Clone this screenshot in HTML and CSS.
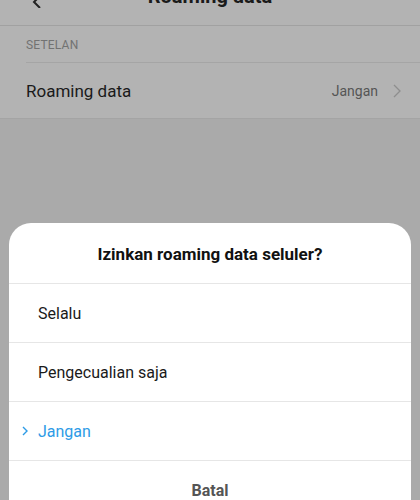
FILE: index.html
```html
<!DOCTYPE html>
<html>
<head>
<meta charset="utf-8">
<link rel="stylesheet" href="styles.css">
</head>
<body>
<div class="screen">
  <header class="topbar">
    <span class="back"><svg width="12" height="12" viewBox="0 0 12 12"><path d="M9 0 L3 6 L9 12" fill="none" stroke="#222" stroke-width="2"/></svg></span>
    <h1 class="title">Roaming data</h1>
  </header>
  <div class="section-label">SETELAN</div>
  <div class="setting-row">
    <span class="setting-name">Roaming data</span>
    <span class="setting-value">Jangan</span>
    <svg class="chev" width="8" height="14" viewBox="0 0 8 14"><path d="M1 1 L7 7 L1 13" fill="none" stroke="#8e8e8e" stroke-width="1.3"/></svg>
  </div>

  <div class="dialog">
    <div class="dialog-title">Izinkan roaming data seluler?</div>
    <div class="option">Selalu</div>
    <div class="option">Pengecualian saja</div>
    <div class="option selected"><svg class="check" width="6" height="10" viewBox="0 0 6 10"><path d="M1 1 L5 5 L1 9" fill="none" stroke="#2d9be6" stroke-width="1.4"/></svg>Jangan</div>
    <div class="cancel">Batal</div>
  </div>
</div>
</body>
</html>
```
FILE: styles.css
```css
* { box-sizing: border-box; }
html, body { margin: 0; padding: 0; }
body {
  width: 420px;
  height: 500px;
  overflow: hidden;
  background: #aaaaaa;
  font-family: Roboto, "Noto Sans", sans-serif;
}
.screen {
  display: flex;
  flex-direction: column;
  height: 500px;
}
.topbar {
  height: 26px;
  background: #b3b3b3;
  border-bottom: 1px solid #a1a1a1;
  display: flex;
  justify-content: center;
  align-items: flex-start;
  position: relative;
}
.back {
  position: absolute;
  left: 31px;
  top: -7px;
}
.title {
  margin: -14px 0 0 0;
  font-size: 20px;
  line-height: 20px;
  font-weight: bold;
  color: #1a1a1a;
}
.section-label {
  background: #b3b3b3;
  padding: 12px 0 0 26px;
  height: 37px;
  font-size: 12px;
  color: #727272;
  letter-spacing: 0.2px;
  position: relative;
}
.section-label::after {
  content: "";
  position: absolute;
  left: 26px;
  right: 0;
  bottom: 0;
  height: 1px;
  background: #a5a5a5;
}
.setting-row {
  background: #b3b3b3;
  height: 56px;
  display: flex;
  align-items: center;
  padding: 0 19px 0 26px;
  border-bottom: 1px solid #a4a4a4;
}
.setting-name {
  font-size: 17px;
  color: #1a1a1a;
  flex: 1;
}
.setting-value {
  font-size: 14px;
  color: #555555;
  margin-right: 15px;
}
.chev { display: block; }
.dialog {
  margin: auto 9px 0 9px;
  background: #ffffff;
  border-radius: 22px 22px 0 0;
  height: 277px;
  display: flex;
  flex-direction: column;
}
.dialog-title {
  height: 61px;
  display: flex;
  align-items: center;
  justify-content: center;
  font-size: 17px;
  font-weight: bold;
  color: #111;
  border-bottom: 1px solid #e6e6e6;
  padding-top: 2px;
}
.option {
  height: 59px;
  display: flex;
  align-items: center;
  padding-left: 29px;
  font-size: 16px;
  color: #1a1a1a;
  border-bottom: 1px solid #e6e6e6;
  position: relative;
}
.option.selected { color: #2d9be6; }
.check {
  position: absolute;
  left: 13px;
  top: 24px;
}
.cancel {
  flex: 1;
  display: flex;
  align-items: center;
  justify-content: center;
  font-size: 16px;
  font-weight: bold;
  color: #555555;
  padding-top: 19px;
}
```
